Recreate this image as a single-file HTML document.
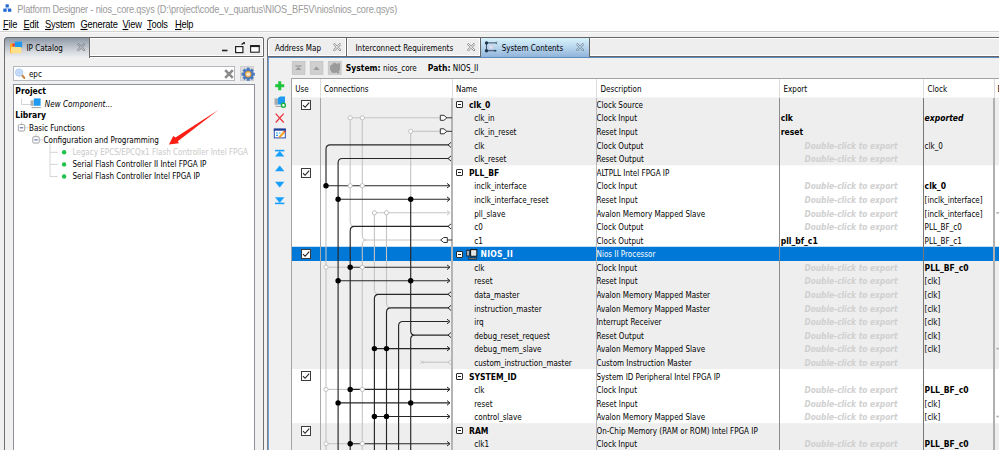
<!DOCTYPE html>
<html><head><meta charset="utf-8"><title>Platform Designer</title>
<style>
html,body{margin:0;padding:0}
body{width:999px;height:450px;overflow:hidden;position:relative;background:#f0f0f0;font-family:"DejaVu Sans Condensed","DejaVu Sans","Liberation Sans",sans-serif;font-size:8px;font-stretch:condensed;color:#000}
div,span,i,b{position:absolute;display:block;white-space:nowrap;box-sizing:border-box}
i,b{font-style:normal;font-weight:normal}
#title{left:0;top:0;width:999px;height:18px;background:#fff}
#title span{left:17.3px;top:1.9px;height:16px;line-height:16px;transform:scale(1,1.13);transform-origin:0 70%;font-family:"Liberation Sans",sans-serif;font-size:9.2px;color:#9a9a9a;letter-spacing:-0.168px}
#menu{left:0;top:18px;width:999px;height:13.5px;background:#fff}
#menu span{top:1.2px;height:14px;line-height:13px;transform:scale(1,1.1);transform-origin:0 75%;font-family:"Liberation Sans",sans-serif;font-size:9.3px;letter-spacing:-0.2px;color:#000}
#menu u{text-decoration:underline;text-underline-offset:1px}
#msep{left:0;top:30.8px;width:999px;height:2.5px;background:linear-gradient(#d0d0d0 0,#d6d6d6 62%,#f8f8f8 66%,#f8f8f8 100%)}
/* left panel */
#lp{left:4px;top:37px;width:260px;height:420px;border:1px solid #707070;border-radius:4px 2px 0 0;background:#f0f0f0}
#lstrip{left:4px;top:37px;width:260px;height:19.6px;border:1px solid #666;border-radius:4px 2px 0 0;background:#eee;box-shadow:inset 0 0 0 1px #fff,0 1px 0 #fff}
#ltab{left:4px;top:37px;width:86px;height:20.5px;border:1px solid #6d6d6d;border-bottom:none;border-radius:4px 0 0 0;background:linear-gradient(#8e99a6 0%,#b3bac4 35%,#d5d9de 68%,#eef0f2 100%)}
#ltab span{left:21.5px;top:1px;height:19px;line-height:19px}
.x8{width:8.4px;height:8.4px}
#search{left:13px;top:65.7px;width:222px;height:15.5px;background:#fff;border:1px solid #b4b7bd}
#search span{left:14.9px;top:1.2px;height:13.5px;line-height:13.5px}
#gear{left:239.7px;top:66px;width:14.5px;height:14.5px;background:#dcdcdc;border:0.5px solid #cfcfcf}
#tree{left:13px;top:84px;width:241.5px;height:380px;background:#fff;border:1px solid #8e9199}
.t{height:12px;line-height:12px;left:0}
.tb{font-weight:bold;font-size:8.5px}
/* right panel */
#rstrip{left:266.9px;top:37px;width:740px;height:20px;border:1px solid #666;border-radius:4px 0 0 0;background:#eee;box-shadow:inset 0 0 0 1px #fff}
.tab{top:37px;height:20px;border:1px solid #666;background:#eee;box-shadow:inset 0 0 0 1px #fff}
.tab span{top:0.9px;height:19px;line-height:19px}
#rp{left:268px;top:57.3px;width:740px;height:400px;border:1px solid #6fa3de;border-top:1.5px solid #5f8cc0;background:#f0f0f0}
.tbtn{top:61px;width:13.5px;height:13.5px;background:#d6d6d6}
#path{left:0;top:62px;height:12px;line-height:12px}
#path span{top:0;height:12px;line-height:12px}
#path b, .gb{font-weight:bold}
#path b{position:static;display:inline;font-size:8.5px}
#hdr{left:291px;top:78px;width:720px;height:19.5px;background:#fff;border-top:1px solid #a3a3a3}
#hdr span{top:1.3px;height:19.5px;line-height:20px}
#hdr i{top:0;width:1px;height:19.5px;background:#dcdcdc}
.bg{left:291px;width:720px}
.sel{left:291px;width:720px;background:#0078d7}
.r{left:291px;width:720px;height:13.58px;line-height:13.58px}
.r span{top:1.5px;height:13.58px;line-height:13.6px}
.sel-r span{color:#fff}
.gb{font-size:8.5px}
.d{left:305.5px}
.e{left:489.7px}
.eb{font-weight:bold;font-size:8.5px}
.dc{left:488px;width:144px;text-align:center;font-weight:bold;font-style:italic;color:#d0d0d0;font-size:8.3px}
.k{left:633.6px}
.kb{font-weight:bold;font-size:8.5px}
.kbi{font-weight:bold;font-style:italic;font-size:8.5px}
.cb{top:2.5px;width:10px;height:10px;border:1px solid #333;background:#fff}
.cb:after{content:"";position:absolute;left:1.6px;top:0.3px;width:5px;height:2.6px;border-left:1.1px solid #222;border-bottom:1.1px solid #222;transform:rotate(-50deg);transform-origin:50% 50%}
.ex{left:165px;top:3.8px;width:7px;height:7px;border:1px solid #2b2b2b;border-radius:1px;background:#fff}
.ex:after{content:"";position:absolute;left:1px;top:2px;width:3px;height:1px;background:#222}
.cbs{position:absolute}
.vl{top:97.5px;height:400px;width:1px}
</style></head><body>
<div id="title"><span>Platform Designer - nios_core.qsys (D:\project\code_v_quartus\NIOS_BF5V\nios\nios_core.qsys)</span>
<svg style="position:absolute;left:3px;top:4px" width="9" height="9" viewBox="0 0 9 9"><rect x="2.6" y="0.3" width="3.2" height="3" fill="#2468d8"/><rect x="0.3" y="4.6" width="3.4" height="3.2" fill="#2468d8"/><rect x="4.9" y="4.6" width="3.4" height="3.2" fill="#2468d8"/><path d="M4.2 3.2V4.4M2 4.7V4H6.6V4.7" stroke="#7aa0d8" stroke-width="0.7" fill="none"/></svg>
</div>
<div id="menu">
<span style="left:3px"><u>F</u>ile</span><span style="left:23.5px"><u>E</u>dit</span><span style="left:45px"><u>S</u>ystem</span><span style="left:80.5px"><u>G</u>enerate</span><span style="left:122.5px"><u>V</u>iew</span><span style="left:147px"><u>T</u>ools</span><span style="left:175px"><u>H</u>elp</span>
</div>
<div id="msep"></div>

<!-- LEFT PANEL -->
<div id="lp"></div>
<div id="lstrip"></div>
<div id="ltab"><span>IP Catalog</span>
<svg style="position:absolute;left:5px;top:3px" width="13" height="13" viewBox="0 0 13 13"><rect x="0" y="2.5" width="3.2" height="9.8" fill="#ffa51e"/><rect x="2.6" y="2.5" width="2.2" height="3" fill="#f0392c"/><rect x="4.9" y="0.6" width="7.2" height="6" fill="#1e9bf0"/><path d="M1.2 5.9H11.3V12.3H0.6Z" fill="#ffe08a"/></svg>
<svg class="x8" style="position:absolute;left:71.5px;top:5px" viewBox="0 0 8 8"><path d="M1.4 0.3L4 2.9L6.6 0.3L7.7 1.4L5.1 4L7.7 6.6L6.6 7.7L4 5.1L1.4 7.7L0.3 6.6L2.9 4L0.3 1.4Z" fill="none" stroke="#7c7c7c" stroke-width="0.8"/></svg>
</div>
<svg style="position:absolute;left:220px;top:42px" width="42" height="12" viewBox="0 0 42 12"><path d="M2 8.5H7.5" stroke="#222" stroke-width="1.6"/><rect x="15.6" y="4.6" width="7.3" height="6" fill="#fff" stroke="#222" stroke-width="1.2"/><path d="M21.5 2.5L24.5 0.6" stroke="#222" stroke-width="1.3"/><path d="M22.8 0.2H25V2.6Z" fill="#222"/><rect x="30.6" y="3.6" width="8.6" height="6.6" fill="#fff" stroke="#222" stroke-width="1.1"/><path d="M30.2 4.2H39.6" stroke="#222" stroke-width="1.8"/></svg>
<div id="search"><span>epc</span>
<svg style="position:absolute;left:0px;top:0px" width="14" height="14" viewBox="0 0 14 14"><path d="M8 8.2L10.3 10.9" stroke="#c8873d" stroke-width="2.2" stroke-linecap="round"/><circle cx="5.1" cy="5.6" r="3.6" fill="#cfe1fa" stroke="#a9c8f3" stroke-width="1"/><circle cx="5.1" cy="5.6" r="1.6" fill="#b9d3f7"/></svg>
<svg style="position:absolute;left:209.6px;top:2.7px" width="10" height="10" viewBox="0 0 10 10"><path d="M1.2 1.2L8.8 8.8M8.8 1.2L1.2 8.8" stroke="#8a8a8a" stroke-width="2.6"/></svg>
</div>
<div id="gear"><svg width="14.5" height="14.5" viewBox="0 0 14.5 14.5"><g transform="translate(7.2 7.2)"><g fill="#4a78bd"><circle r="5"/><rect x="-1.5" y="-6.6" width="3" height="13.2"/><rect x="-1.5" y="-6.6" width="3" height="13.2" transform="rotate(45)"/><rect x="-1.5" y="-6.6" width="3" height="13.2" transform="rotate(90)"/><rect x="-1.5" y="-6.6" width="3" height="13.2" transform="rotate(135)"/></g><circle r="3.1" fill="#f2a53a"/><circle r="2" fill="#f9e6c6"/></g></svg></div>
<div id="tree">
<span class="t tb" style="left:1.3px;top:0.30px">Project</span>
<span class="t" style="left:30.7px;top:13.76px;font-style:italic;letter-spacing:0.08px">New Component...</span>
<span class="t tb" style="left:1.3px;top:24.42px">Library</span>
<span class="t" style="left:15px;top:37.88px">Basic Functions</span>
<span class="t" style="left:29.5px;top:49.94px">Configuration and Programming</span>
<span class="t" style="left:58.5px;top:62.00px;color:#c8c8c8">Legacy EPCS/EPCQx1 Flash Controller Intel FPGA</span>
<span class="t" style="left:58.5px;top:74.06px">Serial Flash Controller II Intel FPGA IP</span>
<span class="t" style="left:58.5px;top:86.12px">Serial Flash Controller Intel FPGA IP</span>
<svg style="position:absolute;left:0;top:0" width="240" height="100" viewBox="0 0 240 100">
<g stroke="#cfcfcf" stroke-width="0.9" fill="none">
<path d="M7.5 13.5V19.5H18"/><path d="M7.5 37V39.5M11 42.8H15"/><path d="M22 49V51.5M25.5 54.9H29.5M36 59V91.6H43.7M36 67.3H43.7M36 79.4H43.7"/>
</g>
<g fill="#fff" stroke="#9a9a9a" stroke-width="0.9"><rect x="4.3" y="39.6" width="6.4" height="6.4" rx="1"/><rect x="18.8" y="51.7" width="6.4" height="6.4" rx="1"/></g>
<g stroke="#3f57a8" stroke-width="1"><path d="M5.8 42.8H9.2M20.3 54.9H23.7"/></g>
<g fill="#1ec24a"><circle cx="50.1" cy="67.3" r="2.2"/><circle cx="50.1" cy="79.4" r="2.2"/><circle cx="50.1" cy="91.5" r="2.2"/></g>
<g><rect x="16.6" y="15.4" width="3" height="5.4" fill="#b0b0b0"/><rect x="19.8" y="13.4" width="6.8" height="7.4" fill="#1e9bf0"/><path d="M17.6 22.6H26.8" stroke="#a5a5a5" stroke-width="1.1"/></g>
<path d="M204.3 25L161.5 52.5L159.3 51.1L154.9 59.4L164.9 58.3L163.8 56.2Z" fill="#fa1e14"/>
</svg>
</div>

<!-- RIGHT PANEL -->
<div id="rstrip"></div>
<div class="tab" style="left:266.9px;width:80.1px;border-radius:4px 0 0 0"><span style="left:7px">Address Map</span>
<svg class="x8" style="position:absolute;left:65px;top:5px" viewBox="0 0 8 8"><path d="M1.4 0.3L4 2.9L6.6 0.3L7.7 1.4L5.1 4L7.7 6.6L6.6 7.7L4 5.1L1.4 7.7L0.3 6.6L2.9 4L0.3 1.4Z" fill="none" stroke="#7c7c7c" stroke-width="0.8"/></svg></div>
<div class="tab" style="left:346px;width:135px"><span style="left:8.5px">Interconnect Requirements</span>
<svg class="x8" style="position:absolute;left:119.5px;top:5px" viewBox="0 0 8 8"><path d="M1.4 0.3L4 2.9L6.6 0.3L7.7 1.4L5.1 4L7.7 6.6L6.6 7.7L4 5.1L1.4 7.7L0.3 6.6L2.9 4L0.3 1.4Z" fill="none" stroke="#7c7c7c" stroke-width="0.8"/></svg></div>
<div class="tab" style="left:480px;width:109.5px;height:21px;border-bottom:none;box-shadow:none;background:linear-gradient(#d8f2fb 0%,#b5d3ec 50%,#8db0d8 100%)"><span style="left:20.7px">System Contents</span>
<svg style="position:absolute;left:3px;top:3px" width="15" height="13" viewBox="0 0 15 13"><rect x="5.6" y="4.6" width="3.2" height="3.2" fill="#f4f6fb" stroke="#c9c4e2" stroke-width="0.5"/><path d="M7.2 1V11.5M3.5 6.2H11.5" stroke="#cfc8e6" stroke-width="0.5" fill="none"/><path d="M2.5 1.9V9.7M2.5 1.9H12.3M2.5 9.7H11" stroke="#2a4058" stroke-width="0.9" fill="none"/><path d="M12.9 0.6L11.9 1.9L12.9 3.2" stroke="#2a4058" stroke-width="0.8" fill="none"/><path d="M10.6 8.4L12.9 9.7L10.6 11Z" fill="#1f3550"/><circle cx="2.5" cy="1.9" r="1.7" fill="#1f3550"/><circle cx="2.5" cy="9.7" r="1.7" fill="#1f3550"/></svg>
<svg class="x8" style="position:absolute;left:95px;top:5px" viewBox="0 0 8 8"><path d="M1.4 0.3L4 2.9L6.6 0.3L7.7 1.4L5.1 4L7.7 6.6L6.6 7.7L4 5.1L1.4 7.7L0.3 6.6L2.9 4L0.3 1.4Z" fill="none" stroke="#76838f" stroke-width="0.8"/></svg></div>
<div id="rp"></div>
<div style="left:267px;top:57px;width:1px;height:400px;background:#808080"></div>
<svg style="position:absolute;left:288px;top:57px" width="60" height="22" viewBox="0 0 60 22">
<g fill="#cfcfcf" stroke="#bdbdbd" stroke-width="0.6"><rect x="4.2" y="4.3" width="12.8" height="13.2"/><rect x="22.2" y="4.3" width="12.8" height="13.2"/><rect x="40.2" y="4.3" width="13" height="13.2"/></g>
<g fill="#9b9b9b"><path d="M7.3 8.4H13.5V9.6H7.3Z"/><path d="M7.3 12.9L10.4 9.7L13.5 12.9Z"/><path d="M25.4 12.9L28.5 9.3L31.6 12.9Z"/>
<path d="M42.3 8.6L44.2 7.6L45 6.2L47 5.6L48.2 6.8L52 6V13.2L50.6 14.2L51.6 15.6L50 16.8L48.6 15.4L46.2 16L43.6 15.4L42.8 13.4L41.8 12.6Z"/></g>
</svg>
<div id="path"><span style="left:345.7px"><b>System:</b> nios_core</span><span style="left:427.8px"><b>Path:</b> NIOS_II</span></div>

<!-- left toolbar icons -->
<svg style="position:absolute;left:272px;top:79px" width="16" height="130" viewBox="0 0 16 130">
<path d="M7.7 2.2V11.2M3.2 6.7H12.2" stroke="#1fc43c" stroke-width="3"/>
<g><rect x="2.5" y="19.4" width="3.2" height="6.4" fill="#a9a9a9"/><path d="M5.7 19.2L8 17.4H13V25.6H5.7Z" fill="#1e9bf0"/><path d="M3.5 27.4H9" stroke="#a9a9a9" stroke-width="1.2"/><circle cx="11.4" cy="26.3" r="2" fill="#fff" stroke="#17b23c" stroke-width="1.4"/></g>
<path d="M3.7 34.7L11.7 43.5M11.7 34.7L3.7 43.5" stroke="#e8303c" stroke-width="1.2"/>
<g><rect x="2.3" y="50.3" width="11" height="8.6" fill="#fff" stroke="#2a4fa8" stroke-width="1"/><path d="M1.8 50.6H13.8" stroke="#1c3f94" stroke-width="2.2"/><path d="M4 54H6M7 54H8.5M4 56.4H6" stroke="#1e9bf0" stroke-width="1.1"/><path d="M7.3 58.2L12 53.2" stroke="#f6a023" stroke-width="2"/><path d="M12 53.2L13 52.1" stroke="#e03a2a" stroke-width="2"/></g>
<g fill="#18a0fb"><path d="M3 70.8H12.4V72.4H3Z"/><path d="M3 77.6L7.7 72L12.4 77.6Z"/>
<path d="M3 92.3L7.7 86.6L12.4 92.3Z"/>
<path d="M3 102.7L7.7 108.4L12.4 102.7Z"/>
<path d="M3 118.3L7.7 124L12.4 118.3Z"/><path d="M3 123.6H12.4V125.2H3Z"/></g>
</svg>

<!-- table -->
<div id="hdr"><span style="left:4.3px">Use</span><span style="left:33px">Connections</span><span style="left:165px">Name</span><span style="left:309.5px">Description</span><span style="left:492.5px">Export</span><span style="left:636.5px">Clock</span><span style="left:706.5px">B</span>
<i style="left:28.5px"></i><i style="left:160.5px"></i><i style="left:304.5px"></i><i style="left:488px"></i><i style="left:632px"></i><i style="left:703px"></i></div>
<svg style="position:absolute;left:0;top:0" width="999" height="450" viewBox="0 0 999 450">
<rect x="291.5" y="97.40" width="720" height="68.20" fill="#eeeeee"/>
<rect x="291.5" y="165.30" width="720" height="81.78" fill="#ffffff"/>
<rect x="291.5" y="246.78" width="720" height="122.52" fill="#eeeeee"/>
<rect x="291.5" y="369.00" width="720" height="54.62" fill="#ffffff"/>
<rect x="291.5" y="423.32" width="720" height="41.04" fill="#eeeeee"/>
<rect x="291.5" y="246.78" width="720" height="14.22" fill="#0078d7"/>
</svg>
<div class="r" style="top:97.40px">
<svg class="cbs" style="left:10px;top:2.60px" width="10" height="10" viewBox="0 0 10 10"><rect x="0.5" y="0.5" width="9" height="9" fill="#fff" stroke="#3c3c3c"/><path d="M2 5.1L4.1 7.3L8.2 2.6" stroke="#222" stroke-width="1.1" fill="none"/></svg>
<i class="ex" style="top:3.60px"></i>
<span class="n gb" style="left:178px">clk_0</span>
<span class="d">Clock Source</span>
</div>
<div class="r" style="top:110.98px">
<span class="n" style="left:183.3px">clk_in</span>
<span class="d">Clock Input</span>
<span class="e eb">clk</span>
<span class="k kbi">exported</span>
</div>
<div class="r" style="top:124.56px">
<span class="n" style="left:183.3px">clk_in_reset</span>
<span class="d">Reset Input</span>
<span class="e eb">reset</span>
</div>
<div class="r" style="top:138.14px">
<span class="n" style="left:183.3px">clk</span>
<span class="d">Clock Output</span>
<span class="e dc">Double-click to export</span>
<span class="k">clk_0</span>
</div>
<div class="r" style="top:151.72px">
<span class="n" style="left:183.3px">clk_reset</span>
<span class="d">Reset Output</span>
<span class="e dc">Double-click to export</span>
</div>
<div class="r" style="top:165.30px">
<svg class="cbs" style="left:10px;top:2.70px" width="10" height="10" viewBox="0 0 10 10"><rect x="0.5" y="0.5" width="9" height="9" fill="#fff" stroke="#3c3c3c"/><path d="M2 5.1L4.1 7.3L8.2 2.6" stroke="#222" stroke-width="1.1" fill="none"/></svg>
<i class="ex" style="top:3.70px"></i>
<span class="n gb" style="left:178px">PLL_BF</span>
<span class="d">ALTPLL Intel FPGA IP</span>
</div>
<div class="r" style="top:178.88px">
<span class="n" style="left:183.3px">inclk_interface</span>
<span class="d">Clock Input</span>
<span class="e dc">Double-click to export</span>
<span class="k kb">clk_0</span>
</div>
<div class="r" style="top:192.46px">
<span class="n" style="left:183.3px">inclk_interface_reset</span>
<span class="d">Reset Input</span>
<span class="e dc">Double-click to export</span>
<span class="k">[inclk_interface]</span>
</div>
<div class="r" style="top:206.04px">
<span class="n" style="left:183.3px">pll_slave</span>
<span class="d">Avalon Memory Mapped Slave</span>
<span class="e dc">Double-click to export</span>
<span class="k">[inclk_interface]</span>
</div>
<div class="r" style="top:219.62px">
<span class="n" style="left:183.3px">c0</span>
<span class="d">Clock Output</span>
<span class="e dc">Double-click to export</span>
<span class="k">PLL_BF_c0</span>
</div>
<div class="r" style="top:233.20px">
<span class="n" style="left:183.3px">c1</span>
<span class="d">Clock Output</span>
<span class="e eb">pll_bf_c1</span>
<span class="k">PLL_BF_c1</span>
</div>
<div class="r sel-r" style="top:246.78px">
<svg class="cbs" style="left:10px;top:2.22px" width="10" height="10" viewBox="0 0 10 10"><rect x="0.5" y="0.5" width="9" height="9" fill="#fff" stroke="#3c3c3c"/><path d="M2 5.1L4.1 7.3L8.2 2.6" stroke="#222" stroke-width="1.1" fill="none"/></svg>
<i class="ex" style="top:4.22px"></i>
<svg style="position:absolute;left:174.5px;top:2px" width="12" height="11" viewBox="0 0 12 11"><rect x="0.9" y="1.2" width="2.2" height="5.8" fill="#fff" stroke="#111" stroke-width="0.9"/><rect x="4.6" y="0.6" width="6.2" height="6.6" fill="#d9d9d9" stroke="#111" stroke-width="1"/><path d="M6.7 1V7M8.7 1V7M5 3H10.4M5 5H10.4" stroke="#f4f4f4" stroke-width="0.5"/><path d="M2.4 9.5H10.8" stroke="#111" stroke-width="2"/><path d="M3 9.5H10.2" stroke="#9a8878" stroke-width="0.8"/></svg>
<span class="n gb" style="left:189.5px;letter-spacing:0.25px">NIOS_II</span>
<span class="d">Nios II Processor</span>
</div>
<div class="r" style="top:260.36px">
<span class="n" style="left:183.3px">clk</span>
<span class="d">Clock Input</span>
<span class="e dc">Double-click to export</span>
<span class="k kb">PLL_BF_c0</span>
</div>
<div class="r" style="top:273.94px">
<span class="n" style="left:183.3px">reset</span>
<span class="d">Reset Input</span>
<span class="e dc">Double-click to export</span>
<span class="k">[clk]</span>
</div>
<div class="r" style="top:287.52px">
<span class="n" style="left:183.3px">data_master</span>
<span class="d">Avalon Memory Mapped Master</span>
<span class="e dc">Double-click to export</span>
<span class="k">[clk]</span>
</div>
<div class="r" style="top:301.10px">
<span class="n" style="left:183.3px">instruction_master</span>
<span class="d">Avalon Memory Mapped Master</span>
<span class="e dc">Double-click to export</span>
<span class="k">[clk]</span>
</div>
<div class="r" style="top:314.68px">
<span class="n" style="left:183.3px">irq</span>
<span class="d">Interrupt Receiver</span>
<span class="e dc">Double-click to export</span>
<span class="k">[clk]</span>
</div>
<div class="r" style="top:328.26px">
<span class="n" style="left:183.3px">debug_reset_request</span>
<span class="d">Reset Output</span>
<span class="e dc">Double-click to export</span>
<span class="k">[clk]</span>
</div>
<div class="r" style="top:341.84px">
<span class="n" style="left:183.3px">debug_mem_slave</span>
<span class="d">Avalon Memory Mapped Slave</span>
<span class="e dc">Double-click to export</span>
<span class="k">[clk]</span>
</div>
<div class="r" style="top:355.42px">
<span class="n" style="left:183.3px">custom_instruction_master</span>
<span class="d">Custom Instruction Master</span>
<span class="e dc">Double-click to export</span>
</div>
<div class="r" style="top:369.00px">
<svg class="cbs" style="left:10px;top:2.00px" width="10" height="10" viewBox="0 0 10 10"><rect x="0.5" y="0.5" width="9" height="9" fill="#fff" stroke="#3c3c3c"/><path d="M2 5.1L4.1 7.3L8.2 2.6" stroke="#222" stroke-width="1.1" fill="none"/></svg>
<i class="ex" style="top:4.00px"></i>
<span class="n gb" style="left:178px">SYSTEM_ID</span>
<span class="d">System ID Peripheral Intel FPGA IP</span>
</div>
<div class="r" style="top:382.58px">
<span class="n" style="left:183.3px">clk</span>
<span class="d">Clock Input</span>
<span class="e dc">Double-click to export</span>
<span class="k kb">PLL_BF_c0</span>
</div>
<div class="r" style="top:396.16px">
<span class="n" style="left:183.3px">reset</span>
<span class="d">Reset Input</span>
<span class="e dc">Double-click to export</span>
<span class="k">[clk]</span>
</div>
<div class="r" style="top:409.74px">
<span class="n" style="left:183.3px">control_slave</span>
<span class="d">Avalon Memory Mapped Slave</span>
<span class="e dc">Double-click to export</span>
<span class="k">[clk]</span>
</div>
<div class="r" style="top:423.32px">
<svg class="cbs" style="left:10px;top:2.68px" width="10" height="10" viewBox="0 0 10 10"><rect x="0.5" y="0.5" width="9" height="9" fill="#fff" stroke="#3c3c3c"/><path d="M2 5.1L4.1 7.3L8.2 2.6" stroke="#222" stroke-width="1.1" fill="none"/></svg>
<i class="ex" style="top:3.68px"></i>
<span class="n gb" style="left:178px">RAM</span>
<span class="d">On-Chip Memory (RAM or ROM) Intel FPGA IP</span>
</div>
<div class="r" style="top:436.90px">
<span class="n" style="left:183.3px">clk1</span>
<span class="d">Clock Input</span>
<span class="e dc">Double-click to export</span>
<span class="k kb">PLL_BF_c0</span>
</div>
<div class="vl" style="left:291px;top:78px;background:#a3a3a3"></div>
<div class="vl" style="left:319.8px;background:#a9a9a9;width:1.3px"></div>
<div class="vl" style="left:451px;background:#b4b4b4;width:1.7px"></div>
<div class="vl" style="left:595.5px;background:#b9b9b9;width:1.5px"></div>
<div class="vl" style="left:778.7px;background:#8c8c8c;width:1.3px"></div>
<div class="vl" style="left:922.8px;background:#777;width:1.3px"></div>
<div class="vl" style="left:993.3px;background:#b0b0b0;width:1.4px"></div>
<svg style="position:absolute;left:0;top:0;pointer-events:none" width="999" height="450" viewBox="0 0 999 450">
<path d="M350.2 117.8H440.0" stroke="#c4c4c4" stroke-width="1.1" fill="none"/>
<path d="M350.2 117.8V222.4" stroke="#c4c4c4" stroke-width="1.1" fill="none"/>
<path d="M362.3 117.8V236.0" stroke="#c4c4c4" stroke-width="1.1" fill="none"/>
<path d="M362.3 244.0V460.0" stroke="#c4c4c4" stroke-width="1.1" fill="none"/>
<path d="M410.7 131.3H440.0" stroke="#c4c4c4" stroke-width="1.1" fill="none"/>
<path d="M410.7 131.3V199.2" stroke="#c4c4c4" stroke-width="1.1" fill="none"/>
<path d="M326.0 185.7V460.0" stroke="#c4c4c4" stroke-width="1.1" fill="none"/>
<path d="M374.4 212.8H448.5" stroke="#c4c4c4" stroke-width="1.1" fill="none"/>
<path d="M374.4 212.8V290.3" stroke="#c4c4c4" stroke-width="1.1" fill="none"/>
<path d="M386.5 212.8V303.9" stroke="#c4c4c4" stroke-width="1.1" fill="none"/>
<path d="M447.0 210.5L450.0 212.8L447.0 215.1" stroke="#c4c4c4" stroke-width="1" fill="none"/>
<path d="M362.3 236.0Q362.3 240.0 366.3 240.0M362.3 244.0Q362.3 240.0 366.3 240.0M366.3 240.0H448.5" stroke="#c4c4c4" stroke-width="1" fill="none"/>
<path d="M350.2 222.4Q350.2 226.4 354.2 226.4" stroke="#c4c4c4" stroke-width="1" fill="none"/>
<path d="M374.4 290.3Q374.4 294.3 378.4 294.3" stroke="#c4c4c4" stroke-width="1" fill="none"/>
<path d="M386.5 303.9Q386.5 307.9 390.5 307.9" stroke="#c4c4c4" stroke-width="1" fill="none"/>
<path d="M326.0 267.2H350.2" stroke="#c4c4c4" stroke-width="1.1" fill="none"/>
<path d="M326.0 389.4H350.2" stroke="#c4c4c4" stroke-width="1.1" fill="none"/>
<path d="M326.0 443.7H350.2" stroke="#c4c4c4" stroke-width="1.1" fill="none"/>
<path d="M422.0 362.2H448.5" stroke="#c4c4c4" stroke-width="1.1" fill="none"/>
<path d="M420.5 360.7l3 3m0 -3l-3 3" stroke="#c4c4c4" stroke-width="0.9"/>
<path d="M451.0 359.7L448.0 362.2L451.0 364.7" stroke="#c4c4c4" stroke-width="1" fill="none"/>
<path d="M448.5 144.9H330.3Q326.0 144.9 326.0 149.2V185.7" stroke="#262626" stroke-width="1.15" fill="none"/>
<path d="M451.0 142.4L448.0 144.9L451.0 147.4" stroke="#262626" stroke-width="1" fill="none"/>
<path d="M448.5 158.5H342.4Q338.1 158.5 338.1 162.8V460.0" stroke="#262626" stroke-width="1.15" fill="none"/>
<path d="M451.0 156.0L448.0 158.5L451.0 161.0" stroke="#262626" stroke-width="1" fill="none"/>
<path d="M448.5 226.4H354.5Q350.2 226.4 350.2 230.7V460.0" stroke="#262626" stroke-width="1.15" fill="none"/>
<path d="M451.0 223.9L448.0 226.4L451.0 228.9" stroke="#262626" stroke-width="1" fill="none"/>
<path d="M448.5 294.3H378.7Q374.4 294.3 374.4 298.6V460.0" stroke="#262626" stroke-width="1.15" fill="none"/>
<path d="M451.0 291.8L448.0 294.3L451.0 296.8" stroke="#262626" stroke-width="1" fill="none"/>
<path d="M448.5 307.9H390.8Q386.5 307.9 386.5 312.2V460.0" stroke="#262626" stroke-width="1.15" fill="none"/>
<path d="M451.0 305.4L448.0 307.9L451.0 310.4" stroke="#262626" stroke-width="1" fill="none"/>
<path d="M448.5 321.5H402.9Q398.6 321.5 398.6 325.8V460.0" stroke="#262626" stroke-width="1.15" fill="none"/>
<path d="M447.0 319.2L450.0 321.5L447.0 323.8" stroke="#262626" stroke-width="1" fill="none"/>
<path d="M410.7 199.2V331.1" stroke="#262626" stroke-width="1.15" fill="none"/>
<path d="M410.7 339.1V460.0" stroke="#262626" stroke-width="1.15" fill="none"/>
<path d="M410.7 331.1Q410.7 335.1 414.7 335.1M410.7 339.1Q410.7 335.1 414.7 335.1M414.7 335.1H448.5" stroke="#262626" stroke-width="1.15" fill="none"/>
<path d="M451.0 332.6L448.0 335.1L451.0 337.6" stroke="#262626" stroke-width="1" fill="none"/>
<path d="M326.0 185.7H449.5" stroke="#262626" stroke-width="1.15" fill="none"/>
<path d="M447.0 183.4L450.0 185.7L447.0 188.0" stroke="#262626" stroke-width="1" fill="none"/>
<path d="M338.1 199.2H449.5" stroke="#262626" stroke-width="1.15" fill="none"/>
<path d="M447.0 196.9L450.0 199.2L447.0 201.6" stroke="#262626" stroke-width="1" fill="none"/>
<path d="M350.2 267.2H449.5" stroke="#262626" stroke-width="1.15" fill="none"/>
<path d="M447.0 264.9L450.0 267.2L447.0 269.5" stroke="#262626" stroke-width="1" fill="none"/>
<path d="M338.1 280.7H449.5" stroke="#262626" stroke-width="1.15" fill="none"/>
<path d="M447.0 278.4L450.0 280.7L447.0 283.0" stroke="#262626" stroke-width="1" fill="none"/>
<path d="M374.4 348.6H449.5" stroke="#262626" stroke-width="1.15" fill="none"/>
<path d="M447.0 346.3L450.0 348.6L447.0 350.9" stroke="#262626" stroke-width="1" fill="none"/>
<path d="M350.2 389.4H449.5" stroke="#262626" stroke-width="1.15" fill="none"/>
<path d="M447.0 387.1L450.0 389.4L447.0 391.7" stroke="#262626" stroke-width="1" fill="none"/>
<path d="M338.1 402.9H449.5" stroke="#262626" stroke-width="1.15" fill="none"/>
<path d="M447.0 400.6L450.0 402.9L447.0 405.2" stroke="#262626" stroke-width="1" fill="none"/>
<path d="M374.4 416.5H449.5" stroke="#262626" stroke-width="1.15" fill="none"/>
<path d="M447.0 414.2L450.0 416.5L447.0 418.8" stroke="#262626" stroke-width="1" fill="none"/>
<path d="M350.2 443.7H449.5" stroke="#262626" stroke-width="1.15" fill="none"/>
<path d="M447.0 441.4L450.0 443.7L447.0 446.0" stroke="#262626" stroke-width="1" fill="none"/>
<path d="M440.3 115.3h3.6l3 2.5l-3 2.5h-3.6z" stroke="#333" stroke-width="1" fill="#fff"/>
<path d="M447 117.8H452.0" stroke="#333" stroke-width="1"/>
<path d="M440.3 128.8h3.6l3 2.5l-3 2.5h-3.6z" stroke="#333" stroke-width="1" fill="#fff"/>
<path d="M447 131.3H452.0" stroke="#333" stroke-width="1"/>
<path d="M447.3 237.5h-3.6l-3 2.5l3 2.5h3.6z" stroke="#333" stroke-width="1" fill="#fff"/>
<path d="M447.3 240.0H452.0" stroke="#333" stroke-width="1"/>
<circle cx="350.2" cy="117.8" r="2.1" fill="#fff" stroke="#bbb" stroke-width="0.9"/>
<circle cx="362.3" cy="117.8" r="2.1" fill="#fff" stroke="#bbb" stroke-width="0.9"/>
<circle cx="410.7" cy="131.3" r="2.1" fill="#fff" stroke="#bbb" stroke-width="0.9"/>
<circle cx="350.2" cy="185.7" r="2.1" fill="#fff" stroke="#bbb" stroke-width="0.9"/>
<circle cx="362.3" cy="185.7" r="2.1" fill="#fff" stroke="#bbb" stroke-width="0.9"/>
<circle cx="374.4" cy="212.8" r="2.1" fill="#fff" stroke="#bbb" stroke-width="0.9"/>
<circle cx="386.5" cy="212.8" r="2.1" fill="#fff" stroke="#bbb" stroke-width="0.9"/>
<circle cx="326.0" cy="267.2" r="2.1" fill="#fff" stroke="#bbb" stroke-width="0.9"/>
<circle cx="362.3" cy="267.2" r="2.1" fill="#fff" stroke="#bbb" stroke-width="0.9"/>
<circle cx="326.0" cy="389.4" r="2.1" fill="#fff" stroke="#bbb" stroke-width="0.9"/>
<circle cx="362.3" cy="389.4" r="2.1" fill="#fff" stroke="#bbb" stroke-width="0.9"/>
<circle cx="326.0" cy="443.7" r="2.1" fill="#fff" stroke="#bbb" stroke-width="0.9"/>
<circle cx="362.3" cy="443.7" r="2.1" fill="#fff" stroke="#bbb" stroke-width="0.9"/>
<circle cx="326.0" cy="185.7" r="2.7" fill="#000"/>
<circle cx="338.1" cy="199.2" r="2.7" fill="#000"/>
<circle cx="410.7" cy="199.2" r="2.7" fill="#000"/>
<circle cx="350.2" cy="267.2" r="2.7" fill="#000"/>
<circle cx="338.1" cy="280.7" r="2.7" fill="#000"/>
<circle cx="410.7" cy="280.7" r="2.7" fill="#000"/>
<circle cx="374.4" cy="348.6" r="2.7" fill="#000"/>
<circle cx="386.5" cy="348.6" r="2.7" fill="#000"/>
<circle cx="350.2" cy="389.4" r="2.7" fill="#000"/>
<circle cx="338.1" cy="402.9" r="2.7" fill="#000"/>
<circle cx="410.7" cy="402.9" r="2.7" fill="#000"/>
<circle cx="374.4" cy="416.5" r="2.7" fill="#000"/>
<circle cx="386.5" cy="416.5" r="2.7" fill="#000"/>
<circle cx="350.2" cy="443.7" r="2.7" fill="#000"/>
<rect x="996.3" y="212.0" width="3" height="1.6" fill="#b5b5b5"/>
<rect x="996.3" y="347.8" width="3" height="1.6" fill="#b5b5b5"/>
<rect x="996.3" y="415.7" width="3" height="1.6" fill="#b5b5b5"/>
</svg>
</body></html>
